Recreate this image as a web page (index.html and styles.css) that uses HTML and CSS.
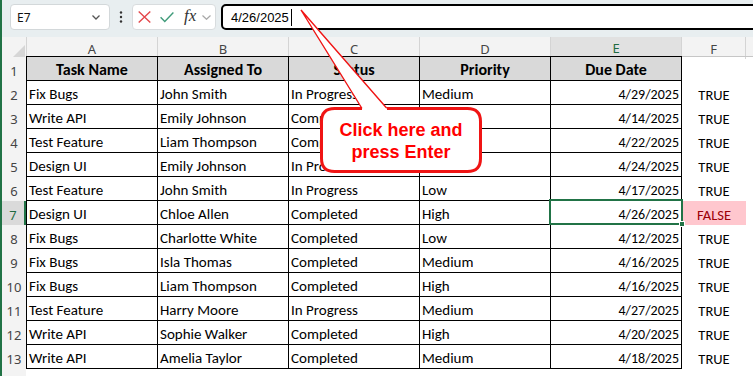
FILE: index.html
```html
<!DOCTYPE html>
<html>
<head>
<meta charset="utf-8">
<link rel="stylesheet" href="styles.css">
</head>
<body>
<div class="app">
  <div class="fbar">
    <div class="namebox"><span>E7</span><svg class="chev" width="8" height="5" viewBox="0 0 8 5"><polyline points="0.5,0.5 4,4 7.5,0.5" fill="none" stroke="#555" stroke-width="1.3"/></svg></div>
    <div class="dots"><svg width="4" height="12" viewBox="0 0 4 12"><circle cx="2" cy="1.5" r="1.2" fill="#333"/><circle cx="2" cy="6" r="1.2" fill="#333"/><circle cx="2" cy="10.5" r="1.2" fill="#333"/></svg></div>
    <div class="fbtns">
      <svg class="ix" width="13" height="12" viewBox="0 0 13 12"><path d="M0.7 0.5 L12.3 11.5 M12.3 0.5 L0.7 11.5" stroke="#e4474b" stroke-width="1.4" fill="none"/></svg>
      <svg class="ic" width="14" height="11" viewBox="0 0 14 11"><polyline points="0.6,5.2 4.8,9.6 13.4,0.6" stroke="#3f9b7a" stroke-width="1.4" fill="none"/></svg>
      <span class="fx">fx</span>
      <svg class="chev2" width="9" height="5" viewBox="0 0 9 5"><polyline points="0.5,0.5 4.5,4.3 8.5,0.5" fill="none" stroke="#a8a8a8" stroke-width="1.2"/></svg>
    </div>
    <div class="finput"><span>4/26/2025</span><span class="caret"></span></div>
  </div>

  <div class="sheet">
    <div class="row ch">
      <div class="corner"><span class="tri"></span></div>
      <div class="h ha">A</div><div class="h">B</div><div class="h">C</div><div class="h">D</div><div class="h sel-col">E</div><div class="h">F</div><div class="h hg"></div>
    </div>
    <div class="row r1">
      <div class="rh">1</div>
      <div class="c a">Task Name</div><div class="c">Assigned To</div><div class="c">Status</div><div class="c">Priority</div><div class="c">Due Date</div><div class="f"></div><div class="g"></div>
    </div>
    <div class="row">
      <div class="rh">2</div>
      <div class="c a">Fix Bugs</div><div class="c">John Smith</div><div class="c">In Progress</div><div class="c">Medium</div><div class="c d">4/29/2025</div><div class="f">TRUE</div><div class="g"></div>
    </div>
    <div class="row">
      <div class="rh">3</div>
      <div class="c a">Write API</div><div class="c">Emily Johnson</div><div class="c">Comp</div><div class="c"></div><div class="c d">4/14/2025</div><div class="f">TRUE</div><div class="g"></div>
    </div>
    <div class="row">
      <div class="rh">4</div>
      <div class="c a">Test Feature</div><div class="c">Liam Thompson</div><div class="c">Comp</div><div class="c"></div><div class="c d">4/22/2025</div><div class="f">TRUE</div><div class="g"></div>
    </div>
    <div class="row">
      <div class="rh">5</div>
      <div class="c a">Design UI</div><div class="c">Emily Johnson</div><div class="c">In Pro</div><div class="c"></div><div class="c d">4/24/2025</div><div class="f">TRUE</div><div class="g"></div>
    </div>
    <div class="row">
      <div class="rh">6</div>
      <div class="c a">Test Feature</div><div class="c">John Smith</div><div class="c">In Progress</div><div class="c">Low</div><div class="c d">4/17/2025</div><div class="f">TRUE</div><div class="g"></div>
    </div>
    <div class="row">
      <div class="rh rsel">7</div>
      <div class="c a">Design UI</div><div class="c">Chloe Allen</div><div class="c">Completed</div><div class="c">High</div><div class="c d">4/26/2025</div><div class="f bad">FALSE</div><div class="g"></div>
    </div>
    <div class="row">
      <div class="rh">8</div>
      <div class="c a">Fix Bugs</div><div class="c">Charlotte White</div><div class="c">Completed</div><div class="c">Low</div><div class="c d">4/12/2025</div><div class="f">TRUE</div><div class="g"></div>
    </div>
    <div class="row">
      <div class="rh">9</div>
      <div class="c a">Fix Bugs</div><div class="c">Isla Thomas</div><div class="c">Completed</div><div class="c">Medium</div><div class="c d">4/16/2025</div><div class="f">TRUE</div><div class="g"></div>
    </div>
    <div class="row">
      <div class="rh">10</div>
      <div class="c a">Fix Bugs</div><div class="c">Liam Thompson</div><div class="c">Completed</div><div class="c">High</div><div class="c d">4/16/2025</div><div class="f">TRUE</div><div class="g"></div>
    </div>
    <div class="row">
      <div class="rh">11</div>
      <div class="c a">Test Feature</div><div class="c">Harry Moore</div><div class="c">In Progress</div><div class="c">Medium</div><div class="c d">4/27/2025</div><div class="f">TRUE</div><div class="g"></div>
    </div>
    <div class="row">
      <div class="rh">12</div>
      <div class="c a">Write API</div><div class="c">Sophie Walker</div><div class="c">Completed</div><div class="c">High</div><div class="c d">4/20/2025</div><div class="f">TRUE</div><div class="g"></div>
    </div>
    <div class="row">
      <div class="rh">13</div>
      <div class="c a">Write API</div><div class="c">Amelia Taylor</div><div class="c">Completed</div><div class="c">Medium</div><div class="c d">4/18/2025</div><div class="f">TRUE</div><div class="g"></div>
    </div>
    <div class="row r14">
      <div class="rh"></div>
    </div>
  </div>

  <div class="selbox"></div>
  <div class="handle"></div>

  <svg class="callout" width="753" height="376" viewBox="0 0 753 376">
    <path d="M362 108.5 L301 10 L387 108.5" fill="#fff" stroke="#f01414" stroke-width="1.4" stroke-linejoin="miter"/>
    <path d="M387 108.5 L467.5 108.5 Q480.5 108.5 480.5 121.5 L480.5 158.5 Q480.5 171.5 467.5 171.5 L334.5 171.5 Q321.5 171.5 321.5 158.5 L321.5 121.5 Q321.5 108.5 334.5 108.5 L362 108.5" fill="#fff" stroke="#f01414" stroke-width="3"/>
  </svg>
  <div class="ctext">Click here and<br>press Enter</div>
</div>
</body>
</html>
```

FILE: styles.css
```css
* { box-sizing: border-box; }
html, body { margin: 0; padding: 0; }
body {
  width: 753px;
  height: 376px;
  overflow: hidden;
  background: #fff;
  font-family: "Liberation Sans", Arial, sans-serif;
}
.app {
  position: relative;
  height: 376px;
  border-left: 2px solid #217346;
}

/* formula bar */
.fbar {
  height: 37px;
  background: #e8eef0;
  display: flex;
  align-items: flex-start;
  padding: 4px 0 0 8px;
  white-space: nowrap;
}
.namebox {
  flex: none;
  width: 100px;
  height: 26px;
  background: #fff;
  border: 1px solid #d3d8da;
  border-radius: 4px;
  display: flex;
  align-items: center;
  justify-content: space-between;
  padding: 0 9px 0 6px;
  font: 12px "Noto Sans", sans-serif;
  color: #111;
}
.dots {
  flex: none;
  width: 22px;
  height: 26px;
  display: flex;
  align-items: center;
  justify-content: center;
}
.fbtns {
  flex: none;
  width: 84px;
  height: 26px;
  background: #fff;
  border: 1px solid #d8dcde;
  border-radius: 4px;
  display: flex;
  align-items: center;
  padding-left: 5px;
}
.ix { margin-right: 9px; }
.ic { margin-right: 10px; }
.fx {
  width: 16px;
  font: italic 17px "Liberation Serif", "DejaVu Serif", serif;
  color: #333;
  line-height: 20px;
  margin-top: -2px;
}
.chev2 { margin-left: 2px; }
.finput {
  flex: none;
  width: 560px;
  height: 26px;
  margin-left: 5px;
  background: #fff;
  border: 2px solid #000;
  border-radius: 5px;
  display: flex;
  align-items: center;
  padding-left: 8px;
  font: 13px "Liberation Sans", Arial, sans-serif;
  color: #000;
}
.caret {
  width: 1px;
  height: 17px;
  background: #000;
  margin-left: 2px;
}

/* sheet */
.row {
  display: grid;
  grid-template-columns: 24px 132px 131px 131px 131px 131px 64px 1fr;
  height: 24px;
}
.row.ch { height: 19px; background: #f3f3f3; }
.row.r1 { height: 25px; }
.row.r14 { height: 10px; }

.corner { position: relative; background: #f3f3f3; }
.tri {
  position: absolute;
  right: 1px;
  bottom: 2px;
  width: 0;
  height: 0;
  border-left: 12px solid transparent;
  border-bottom: 12px solid #d6d6d6;
}
.h {
  display: flex;
  align-items: center;
  justify-content: center;
  padding-top: 2px;
  font: 13px "Noto Sans", sans-serif;
  color: #444;
  border-right: 1px solid #d4d4d4;
}
.h.ha { border-left: 1px solid #d4d4d4; }
.h.hg { border-right: none; }
.h.sel-col {
  background: #e1e1e1;
  color: #1f6b42;
  border-bottom: 2px solid #217346;
}

.rh {
  display: flex;
  align-items: center;
  justify-content: center;
  padding-top: 4px;
  background: #f3f3f3;
  font: 13px "Noto Sans", sans-serif;
  color: #444;
}
.rh.rsel {
  background: #dadada;
  color: #1f6b42;
  border-right: 2px solid #217346;
}

.c {
  display: flex;
  align-items: center;
  padding: 3px 2px 0 2px;
  border-right: 1px solid #000;
  border-bottom: 1px solid #000;
  white-space: nowrap;
  overflow: hidden;
  font-family: Carlito, Lato, sans-serif;
  font-size: 15px;
  color: #000;
}
.c.a { border-left: 1px solid #000; }
.c.d { justify-content: flex-end; font-size: 14px; }
.r1 .c {
  border-top: 1px solid #000;
  background: #d9d9d9;
  font-weight: bold;
  font-size: 16px;
  justify-content: center;
  padding-top: 2px;
}
.r1 .rh, .r1 .f, .r1 .g { border-top: 1px solid #c6c6c6; }
.f {
  display: flex;
  align-items: center;
  justify-content: center;
  padding-top: 3px;
  font-family: Carlito, Lato, sans-serif;
  font-size: 14.5px;
  color: #000;
}
.f.bad { background: #ffc7ce; color: #9c0006; }

/* selection */
.selbox {
  position: absolute;
  left: 547px;
  top: 199px;
  width: 134px;
  height: 26px;
  border: 2px solid #217346;
}
.handle {
  position: absolute;
  left: 677px;
  top: 221px;
  width: 6px;
  height: 6px;
  background: #217346;
  border: 1px solid #fff;
}

/* callout */
.callout {
  position: absolute;
  left: -2px;
  top: 0;
}
.ctext {
  position: absolute;
  left: 318px;
  top: 107px;
  width: 162px;
  height: 66px;
  padding-top: 3px;
  display: flex;
  flex-direction: column;
  justify-content: center;
  text-align: center;
  font: bold 18px/21.5px "Liberation Sans", Arial, sans-serif;
  color: #f00;
}
```
